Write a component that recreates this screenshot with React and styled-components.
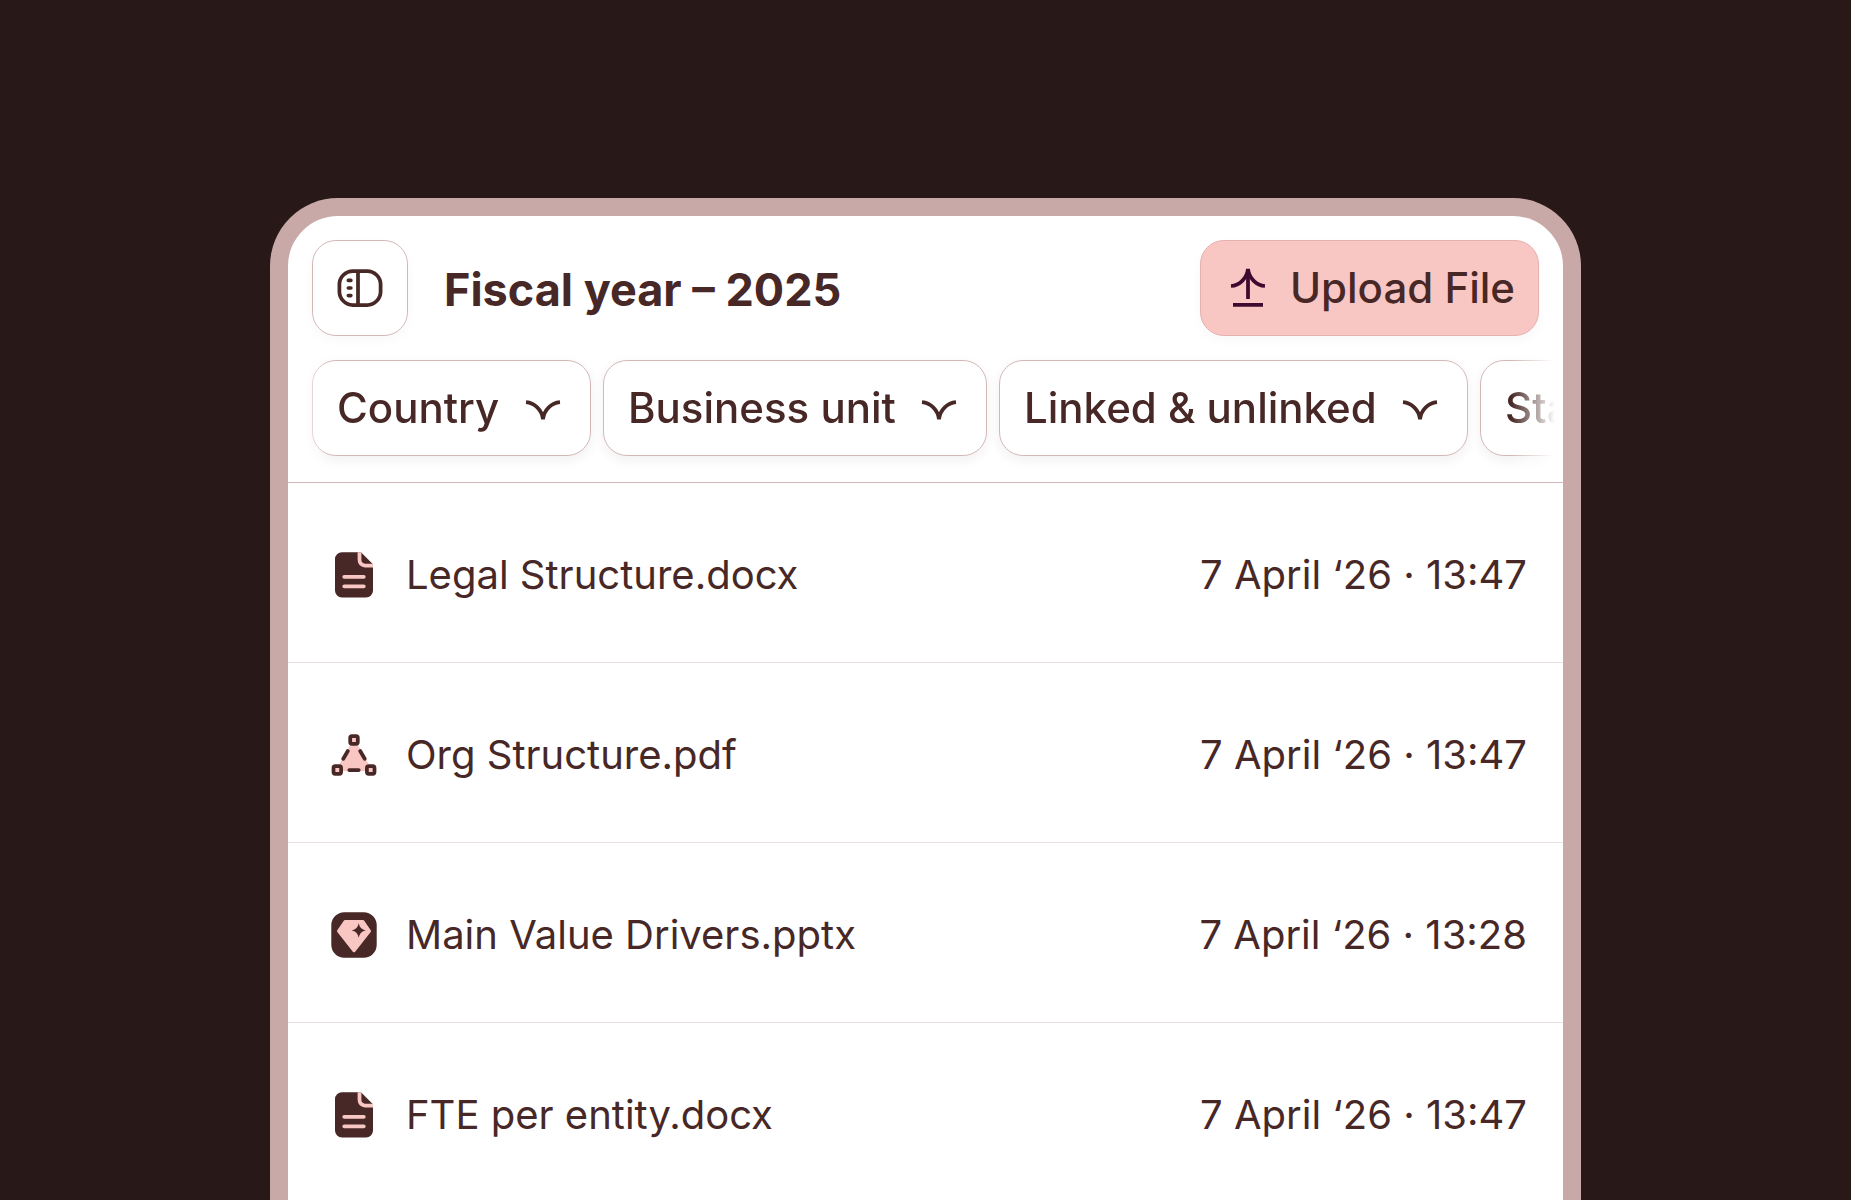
import React from "react";
import styled, { createGlobalStyle } from "styled-components";

const color = {
  backdrop: "#281818",
  frame: "#c9a9a7",
  ink: "#472826",
  plum: "#3f0a30",
  blush: "#f8c6c3",
  blushLine: "#e6b1af",
  line: "#d3b8b7",
  rowLine: "#ecdfde",
};

const GlobalStyle = createGlobalStyle`
  *, *::before, *::after { box-sizing: border-box; }
  body {
    margin: 0;
    background: ${color.backdrop};
    color: ${color.ink};
    font-family: Inter, "Liberation Sans", sans-serif;
  }
`;

const Stage = styled.main`
  display: flex;
  height: 100vh;
  padding: 198px 270px 0;
  overflow: hidden;
`;

const Frame = styled.section`
  flex: 1;
  min-width: 0;
  border: 18px solid ${color.frame};
  border-bottom: 0;
  border-radius: 68px 68px 0 0;
  background: #fff;
  overflow: hidden;
`;

const Header = styled.header`
  padding-top: 24px;
  border-bottom: 1px solid ${color.line};
`;

const TitleBar = styled.div`
  display: flex;
  align-items: center;
  gap: 36px;
  padding: 0 24px;
`;

const Title = styled.h1`
  flex: 1;
  margin: 0;
  padding-top: 4px;
  font-size: 45px;
  line-height: 56px;
  font-weight: 700;
`;

const Button = styled.button`
  display: flex;
  align-items: center;
  justify-content: center;
  gap: 18px;
  height: 96px;
  min-width: 96px;
  padding: 0 ${(p) => (p.$primary ? "23px" : "0")};
  border: 1px solid ${(p) => (p.$primary ? color.blushLine : color.line)};
  border-radius: 24px;
  background: ${(p) => (p.$primary ? color.blush : "#fff")};
  box-shadow: 0 4px 12px rgba(71, 40, 38, 0.03);
  color: inherit;
  font: 500 42px/56px Inter, "Liberation Sans", sans-serif;
  cursor: pointer;
`;

const Filters = styled.div`
  display: flex;
  gap: 12px;
  padding: 24px 0 26px 24px;
  overflow: hidden;
  mask-image: linear-gradient(
    to right,
    transparent 0,
    #000 42px,
    #000 calc(100% - 52px),
    transparent calc(100% - 8px)
  );
`;

const Filter = styled.label`
  position: relative;
  flex: none;
`;

const FilterSelect = styled.select`
  display: block;
  appearance: none;
  height: 96px;
  margin: 0;
  padding: 0 90px 0 24px;
  border: 1px solid ${color.line};
  border-radius: 24px;
  background: #fff;
  box-shadow: 0 4px 12px rgba(71, 40, 38, 0.07);
  color: inherit;
  font: 500 42px/56px Inter, "Liberation Sans", sans-serif;
  cursor: pointer;
`;

const FilterArrow = styled.span`
  position: absolute;
  top: 24px;
  right: 24px;
  height: 48px;
  pointer-events: none;
`;

const Icon = styled.svg`
  display: block;
  flex: none;
  width: 48px;
  height: 48px;
  fill: none;
`;

const Files = styled.table`
  width: 100%;
  border-spacing: 0;
  font-size: 40px;
  line-height: 48px;
`;

const Cell = styled.td`
  height: 180px;
  padding: 4px 36px 0 42px;
  border-bottom: 1px solid ${color.rowLine};
  text-align: ${(p) => (p.$end ? "right" : "left")};
  white-space: nowrap;
`;

const FileName = styled.div`
  display: flex;
  align-items: center;
  gap: 28px;
`;

const PanelIcon = () => (
  <Icon viewBox="0 0 48 48" stroke={color.ink} strokeWidth="3.75" aria-hidden="true">
    <rect x="3.4" y="7" width="41.2" height="34" rx="13.5" />
    <path d="M22 7v34" />
    <path d="M12.3 16.4h2.6M12.3 24h2.6M12.3 31.6h2.6" strokeWidth="3.6" strokeLinecap="round" />
  </Icon>
);

const UploadIcon = () => (
  <Icon viewBox="0 0 48 48" stroke={color.plum} strokeWidth="3.75" aria-hidden="true">
    <path d="M24 7v28M9 40.8h30" />
    <path d="M7 22C15.500 21.500 22.800 14.500 24 5C25.200 14.500 32.500 21.500 41 22" />
  </Icon>
);

const ArrowIcon = () => (
  <Icon viewBox="0 0 48 48" stroke={color.ink} strokeWidth="3.75" aria-hidden="true">
    <path d="M7 18.200C15.500 19 22.800 25.500 24 35.200C25.200 25.500 32.500 19 41 18.200" />
  </Icon>
);

const DocIcon = () => (
  <Icon viewBox="0 0 48 48" aria-hidden="true">
    <path
      d="M12 1.300H31L43 13.300V39.500a7 7 0 0 1-7 7H12a7 7 0 0 1-7-7V8.300a7 7 0 0 1 7-7Z"
      fill={color.ink}
    />
    <path d="M29.500 1.300V9a5.500 5.500 0 0 0 5.500 5.500H43" stroke={color.blush} strokeWidth="3.75" />
    <path
      d="M14.200 25.800H33.800M14.200 35.300H33.800"
      stroke={color.blush}
      strokeWidth="3.75"
      strokeLinecap="round"
    />
  </Icon>
);

const OrgIcon = () => (
  <Icon viewBox="0 0 48 48" aria-hidden="true">
    <path d="M24 9L40.700 39H7.300Z" fill={color.blush} stroke={color.blush} strokeWidth="2" />
    <g fill={color.blush} stroke={color.ink} strokeWidth="3.75">
      <rect x="20.200" y="5.200" width="7.600" height="7.600" rx="1.800" />
      <rect x="3.500" y="35.200" width="7.600" height="7.600" rx="1.800" />
      <rect x="36.900" y="35.200" width="7.600" height="7.600" rx="1.800" />
      <path
        d="M17.800 20L13.300 27.800M30.200 20L34.700 27.800M19.300 39H28.700"
        strokeLinecap="round"
      />
    </g>
  </Icon>
);

const GemIcon = () => (
  <Icon viewBox="0 0 48 48" aria-hidden="true">
    <rect x="1.300" y="1.300" width="45.400" height="45.400" rx="13" fill={color.ink} />
    <path
      d="M15 10.500H33L39.500 20L24 39.700L8.500 20Z"
      fill={color.blush}
      stroke={color.blush}
      strokeWidth="3"
      strokeLinejoin="round"
    />
    <path
      d="M28.700 12.300Q29.800 18.400 35.700 19.500Q29.800 20.600 28.700 26.700Q27.600 20.600 21.700 19.500Q27.600 18.400 28.700 12.300Z"
      fill={color.ink}
    />
  </Icon>
);

const filters = ["Country", "Business unit", "Linked & unlinked", "Status"];

const files = [
  { icon: DocIcon, name: "Legal Structure.docx", date: "7 April ‘26 · 13:47" },
  { icon: OrgIcon, name: "Org Structure.pdf", date: "7 April ‘26 · 13:47" },
  { icon: GemIcon, name: "Main Value Drivers.pptx", date: "7 April ‘26 · 13:28" },
  { icon: DocIcon, name: "FTE per entity.docx", date: "7 April ‘26 · 13:47" },
];

export default function App() {
  return (
    <>
      <GlobalStyle />
      <Stage>
        <Frame>
          <Header>
            <TitleBar>
              <Button type="button" aria-label="Toggle sidebar">
                <PanelIcon />
              </Button>
              <Title>Fiscal year – 2025</Title>
              <Button type="button" $primary>
                <UploadIcon />
                Upload File
              </Button>
            </TitleBar>
            <Filters>
              {filters.map((name) => (
                <Filter key={name}>
                  <FilterSelect aria-label={name}>
                    <option>{name}</option>
                  </FilterSelect>
                  <FilterArrow>
                    <ArrowIcon />
                  </FilterArrow>
                </Filter>
              ))}
            </Filters>
          </Header>
          <Files>
            <tbody>
              {files.map(({ icon: FileIcon, name, date }) => (
                <tr key={name}>
                  <Cell>
                    <FileName>
                      <FileIcon />
                      {name}
                    </FileName>
                  </Cell>
                  <Cell $end>
                    <time>{date}</time>
                  </Cell>
                </tr>
              ))}
            </tbody>
          </Files>
        </Frame>
      </Stage>
    </>
  );
}
